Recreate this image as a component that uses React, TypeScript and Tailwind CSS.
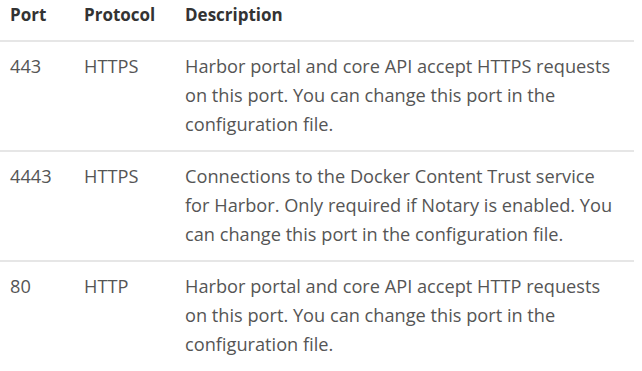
const rows = [
  {
    port: '443',
    protocol: 'HTTPS',
    desc: 'Harbor portal and core API accept HTTPS requests on this port. You can change this port in the configuration file.',
  },
  {
    port: '4443',
    protocol: 'HTTPS',
    desc: 'Connections to the Docker Content Trust service for Harbor. Only required if Notary is enabled. You can change this port in the configuration file.',
  },
  {
    port: '80',
    protocol: 'HTTP',
    desc: 'Harbor portal and core API accept HTTP requests on this port. You can change this port in the configuration file.',
  },
];

export default function App() {
  return (
    <div className="w-[642px] h-[371px] bg-white overflow-hidden" style={{ fontFamily: '"Open Sans", "Noto Sans", sans-serif' }}>
      <table className="w-[634px] border-collapse table-fixed">
        <thead>
          <tr className="border-b-2 border-[#e6e6e6]">
            <th className="w-[84px] pl-[10px] pt-0 pb-[10px] text-left text-[17px] leading-[30px] font-bold text-[#333]">Port</th>
            <th className="w-[101px] pt-0 pb-[10px] text-left text-[17px] leading-[30px] font-bold text-[#333]">Protocol</th>
            <th className="pt-0 pb-[10px] text-left text-[17px] leading-[30px] font-bold text-[#333]">Description</th>
          </tr>
        </thead>
        <tbody>
          {rows.map((r) => (
            <tr key={r.port} className="border-b-2 border-[#e6e6e6] last:border-b-0 align-top">
              <td className="pl-[10px] pt-[10px] pb-[11px] text-[18.2px] leading-[29px] text-[#555]">{r.port}</td>
              <td className="pt-[10px] pb-[11px] text-[18.2px] leading-[29px] text-[#555]">{r.protocol}</td>
              <td className="pt-[10px] pb-[11px] pr-[18px] text-[18.2px] leading-[29px] text-[#555]">{r.desc}</td>
            </tr>
          ))}
        </tbody>
      </table>
    </div>
  );
}
